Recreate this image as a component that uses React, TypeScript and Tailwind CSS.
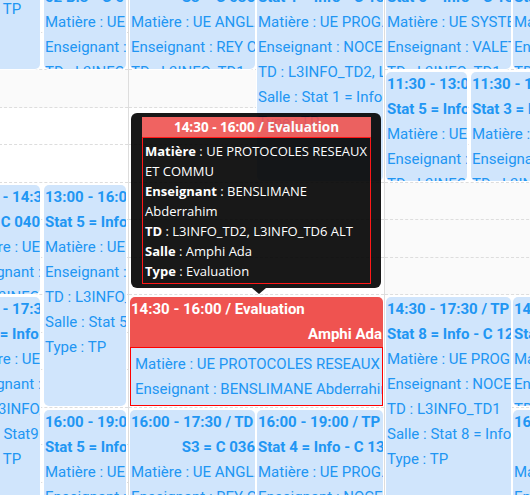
import React from 'react';

type Ev = {
  left: number;
  width: number;
  start: string;
  end: string;
  kind: string;
  room: string;
  mat: string;
  ens: string;
  td: string;
};

const ORIGIN = 8 * 60 + 30;
const SLOT = 37.5;

const toMin = (s: string) => {
  const [h, m] = s.split(':').map(Number);
  return h * 60 + m;
};
const yOf = (s: string) => ((toMin(s) - ORIGIN) / 30) * SLOT;

const days: { shaded: string[]; events: Ev[] }[] = [
  {
    shaded: ['11:30'],
    events: [
      { left: 86, width: 81, start: '08:30', end: '11:30', kind: 'TP', room: 'Stat9 = Info - C 040', mat: 'UE PROG. WEB', ens: 'NOCERA', td: 'L3INFO_TD3' },
      { left: 171, width: 82, start: '10:00', end: '11:30', kind: 'TD', room: '02 B.3 - C 040', mat: 'UE ANGL. S5', ens: 'REY CELINE', td: 'L3INFO_TD3' },
      { left: 86, width: 81, start: '13:00', end: '14:30', kind: 'TD', room: 'S3 = C 040', mat: 'UE ANGL. S5', ens: 'REY CELINE', td: 'L3INFO_TD4' },
      { left: 171, width: 82, start: '13:00', end: '16:00', kind: 'TP', room: 'Stat 5 = Info - C 13', mat: 'UE SYSTEMES', ens: 'VALET', td: 'L3INFO_TD1' },
      { left: 86, width: 81, start: '14:30', end: '17:30', kind: 'TP', room: 'Stat9 = Info - C 040', mat: 'UE PROG. WEB', ens: 'NOCERA', td: 'L3INFO_TD3' },
      { left: 171, width: 82, start: '16:00', end: '19:00', kind: 'TP', room: 'Stat 5 = Info - C 13', mat: 'UE SYSTEMES', ens: 'VALET', td: 'L3INFO_TD2' },
    ],
  },
  {
    shaded: ['11:30'],
    events: [
      { left: 1, width: 125, start: '10:00', end: '11:30', kind: 'TD', room: 'S3 = C 036', mat: 'UE ANGL. S5', ens: 'REY CELINE', td: 'L3INFO_TD1' },
      { left: 128, width: 126, start: '10:00', end: '13:00', kind: 'TP', room: 'Stat 1 = Info - C 13', mat: 'UE PROG. AVANCEE', ens: 'NOCERA', td: 'L3INFO_TD2, L3INFO_TD6 ALT' },
      { left: 1, width: 125, start: '16:00', end: '17:30', kind: 'TD', room: 'S3 = C 036', mat: 'UE ANGL. S5', ens: 'REY CELINE', td: 'L3INFO_TD1' },
      { left: 128, width: 126, start: '16:00', end: '19:00', kind: 'TP', room: 'Stat 4 = Info - C 13', mat: 'UE PROG. AVANCEE', ens: 'NOCERA', td: 'L3INFO_TD2' },
    ],
  },
  {
    shaded: ['13:00', '13:30', '14:00'],
    events: [
      { left: 1, width: 125, start: '10:00', end: '11:30', kind: 'TP', room: 'Stat 6 = Info - C 13', mat: 'UE SYSTEMES', ens: 'VALET', td: 'L3INFO_TD1' },
      { left: 128, width: 126, start: '10:00', end: '11:30', kind: 'TP', room: 'Stat 2 = Info - C 13', mat: 'UE PROG. WEB', ens: 'NOCERA', td: 'L3INFO_TD2' },
      { left: 1, width: 81, start: '11:30', end: '13:00', kind: 'TP', room: 'Stat 5 = Info - C 13', mat: 'UE SYSTEMES', ens: 'VALET', td: 'L3INFO_TD3' },
      { left: 86, width: 81, start: '11:30', end: '13:00', kind: 'TP', room: 'Stat 3 = Info - C 13', mat: 'UE PROG. WEB', ens: 'NOCERA', td: 'L3INFO_TD4' },
      { left: 1, width: 125, start: '14:30', end: '17:30', kind: 'TP', room: 'Stat 8 = Info - C 12', mat: 'UE PROG. AVANCEE', ens: 'NOCERA', td: 'L3INFO_TD1' },
      { left: 128, width: 126, start: '14:30', end: '16:00', kind: 'TP', room: 'Stat 2 = Info - C 13', mat: 'UE SYSTEMES', ens: 'VALET', td: 'L3INFO_TD2' },
      { left: 128, width: 126, start: '16:00', end: '17:30', kind: 'TD', room: 'S3 = C 036', mat: 'UE ANGL. S5', ens: 'REY CELINE', td: 'L3INFO_TD2' },
    ],
  },
];

const slots = Array.from({ length: 21 }, (_, i) => {
  const t = ORIGIN + i * 30;
  return `${String(Math.floor(t / 60)).padStart(2, '0')}:${String(t % 60).padStart(2, '0')}`;
});

function EventBox({ ev }: { ev: Ev }) {
  return (
    <div
      className="absolute overflow-hidden rounded-[5px] bg-[#d0e5fc] pl-[1px] text-[15px] leading-[25px] text-[#2196f3] shadow-[0_0_0_1px_#fff]"
      style={{
        top: yOf(ev.start) + 2,
        height: yOf(ev.end) - yOf(ev.start) - 3.5,
        left: ev.left,
        width: ev.width,
      }}
    >
      <div className="whitespace-nowrap font-bold">
        {ev.start} - {ev.end} / {ev.kind}
      </div>
      <div className="whitespace-nowrap text-right font-bold">{ev.room}</div>
      <div className="whitespace-nowrap">Matière : {ev.mat}</div>
      <div className="whitespace-nowrap">Enseignant : {ev.ens}</div>
      <div className="whitespace-nowrap">TD : {ev.td}</div>
      <div className="whitespace-nowrap">Salle : {ev.room}</div>
      <div className="whitespace-nowrap">Type : {ev.kind}</div>
    </div>
  );
}

function ExamBox() {
  return (
    <div
      className="absolute z-[1] flex flex-col overflow-hidden rounded-t-[5px] text-[15px] leading-[25px] shadow-[0_0_0_1px_#fff]"
      style={{ top: yOf('14:30') + 2, height: yOf('16:00') - yOf('14:30') - 3.5, left: 1, width: 253 }}
    >
      <div className="bg-[#ef5350] px-[1px] font-bold text-white">
        <div className="whitespace-nowrap">14:30 - 16:00 / Evaluation</div>
        <div className="whitespace-nowrap text-right">Amphi Ada</div>
      </div>
      <div className="flex-1 overflow-hidden border border-[#ff0000] bg-[#d0e5fc] p-1 text-[#2196f3]">
        <div className="whitespace-nowrap">Matière : UE PROTOCOLES RESEAUX ET COMMU</div>
        <div className="whitespace-nowrap">Enseignant : BENSLIMANE Abderrahim</div>
      </div>
    </div>
  );
}

function Tooltip() {
  return (
    <div className="absolute left-[131px] top-[113px] z-10 w-[250px] rounded-[6px] bg-black py-1 pl-[11px] pr-[10px] font-['Open_Sans',sans-serif] text-[13px] leading-5 text-white opacity-90">
      <div className="bg-[#ef5350] text-center text-[13.5px] font-bold">14:30 - 16:00 / Evaluation</div>
      <div className="whitespace-nowrap border border-[#ff0000] px-[2px] pb-[2px] pt-[3px] text-left">
        <div>
          <b>Matière</b> : UE PROTOCOLES RESEAUX
        </div>
        <div>ET COMMU</div>
        <div>
          <b>Enseignant</b> : BENSLIMANE
        </div>
        <div>Abderrahim</div>
        <div>
          <b>TD</b> : L3INFO_TD2, L3INFO_TD6 ALT
        </div>
        <div>
          <b>Salle</b> : Amphi Ada
        </div>
        <div>
          <b>Type</b> : Evaluation
        </div>
      </div>
      <div className="absolute -bottom-[6px] left-[121px] h-0 w-0 border-x-[7px] border-t-[6px] border-x-transparent border-t-black" />
    </div>
  );
}

export default function App() {
  return (
    <div className="relative h-[495px] w-[530px] overflow-hidden bg-white font-['Roboto',sans-serif]">
      <div className="-ml-[128px] -mt-[155px] flex">
        {days.map((day, d) => (
          <div key={d} className="relative w-[256px] shrink-0 border-l border-[#ddd]">
            {slots.map((s) => (
              <div
                key={s}
                className={
                  day.shaded.includes(s)
                    ? 'h-[37.5px] border-b border-dashed border-[#ddd] bg-[#fafafa]'
                    : 'h-[37.5px] border-b border-dashed border-[#ddd]'
                }
              />
            ))}
            {day.events.map((ev, i) => (
              <EventBox key={i} ev={ev} />
            ))}
            {d === 1 && <ExamBox />}
          </div>
        ))}
      </div>
      <Tooltip />
    </div>
  );
}
